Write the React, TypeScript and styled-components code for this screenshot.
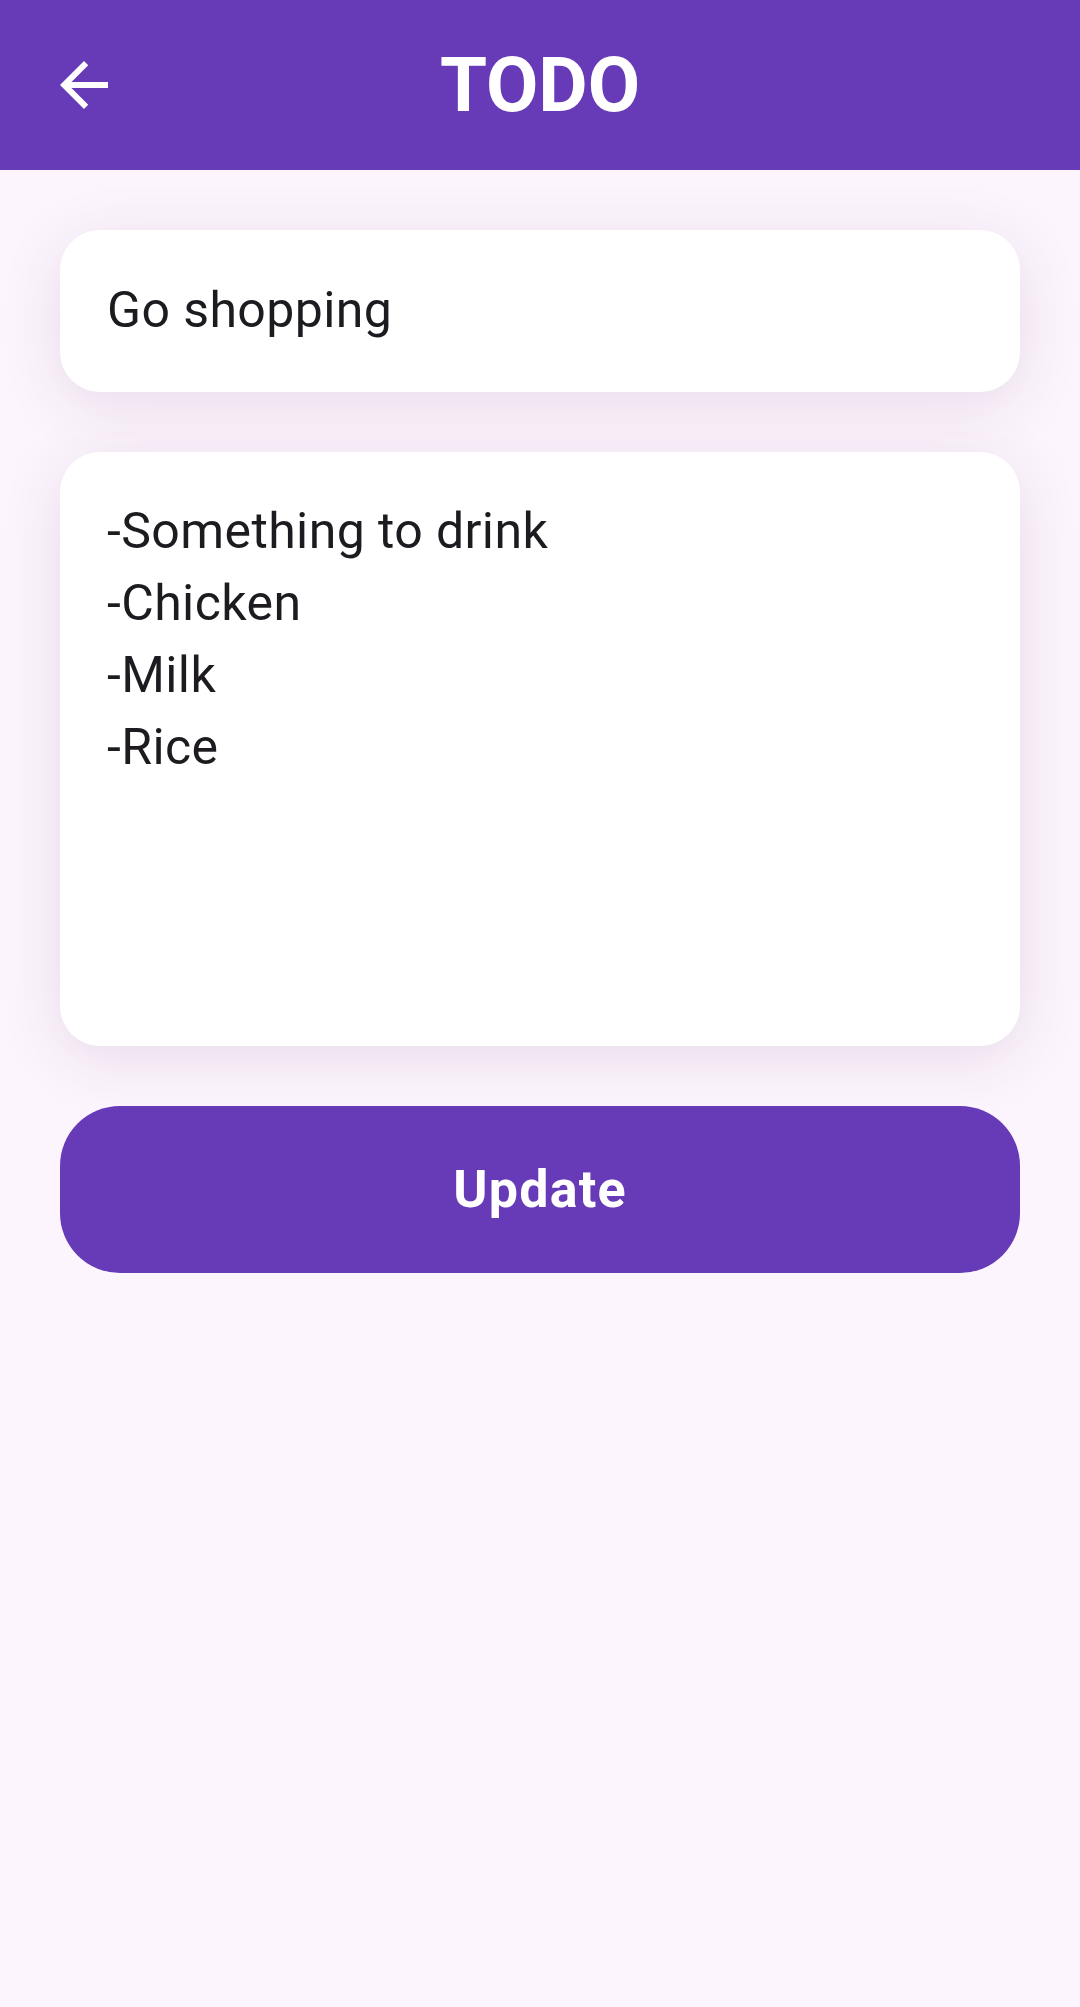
import React from "react";
import styled, { createGlobalStyle } from "styled-components";

const GlobalStyle = createGlobalStyle`
  html, body {
    margin: 0;
    padding: 0;
    background: #fcf5fd;
  }
  body {
    font-family: Roboto, "Liberation Sans", sans-serif;
    color: #1d1b20;
  }
`;

const items = ["-Something to drink", "-Chicken", "-Milk", "-Rice"];

const BackArrow: React.FC = () => (
  <svg width="72" height="72" viewBox="0 0 24 24" fill="#ffffff">
    <path d="M20 11H7.83l5.59-5.59L12 4l-8 8 8 8 1.41-1.41L7.83 13H20v-2z" />
  </svg>
);

export default function App() {
  return (
    <>
      <GlobalStyle />
      <Page>
        <TopBar>
          <BackButton aria-label="back">
            <BackArrow />
          </BackButton>
          <Title>TODO</Title>
          <span />
        </TopBar>
        <Content>
          <Card $padTop={44} $padBottom={46}>
            <Line>Go shopping</Line>
          </Card>
          <Card $padTop={43} $padBottom={48} $minHeight={594}>
            {items.map((item) => (
              <Line key={item}>{item}</Line>
            ))}
          </Card>
          <UpdateButton>Update</UpdateButton>
        </Content>
      </Page>
    </>
  );
}

const Page = styled.div`
  min-height: 2007px;
  background: #fcf5fd;
`;

const TopBar = styled.header`
  height: 170px;
  background: #673ab7;
  display: grid;
  grid-template-columns: 1fr auto 1fr;
  align-items: center;
`;

const BackButton = styled.button`
  justify-self: start;
  margin-left: 48px;
  padding: 0;
  border: none;
  background: transparent;
  display: flex;
  align-items: center;
  cursor: pointer;
`;

const Title = styled.h1`
  margin: 0;
  font-size: 76px;
  font-weight: 700;
  color: #ffffff;
  line-height: 1;
`;

const Content = styled.main`
  padding: 60px 60px 0;
  display: flex;
  flex-direction: column;
  gap: 60px;
`;

const Card = styled.div<{ $padTop: number; $padBottom: number; $minHeight?: number }>`
  box-sizing: border-box;
  background: #ffffff;
  border-radius: 40px;
  padding: ${(p) => p.$padTop}px 47px ${(p) => p.$padBottom}px;
  min-height: ${(p) => (p.$minHeight ? `${p.$minHeight}px` : "auto")};
  box-shadow: 0 12px 60px rgba(90, 50, 110, 0.13);
`;

const Line = styled.div`
  font-size: 50px;
  line-height: 72px;
  color: #1d1b20;
  letter-spacing: 0.4px;
`;

const UpdateButton = styled.button`
  height: 167px;
  border: none;
  border-radius: 60px;
  background: #673ab7;
  color: #ffffff;
  font-family: Roboto, "Liberation Sans", sans-serif;
  font-size: 52px;
  font-weight: 700;
  letter-spacing: 1.2px;
  cursor: pointer;
`;
